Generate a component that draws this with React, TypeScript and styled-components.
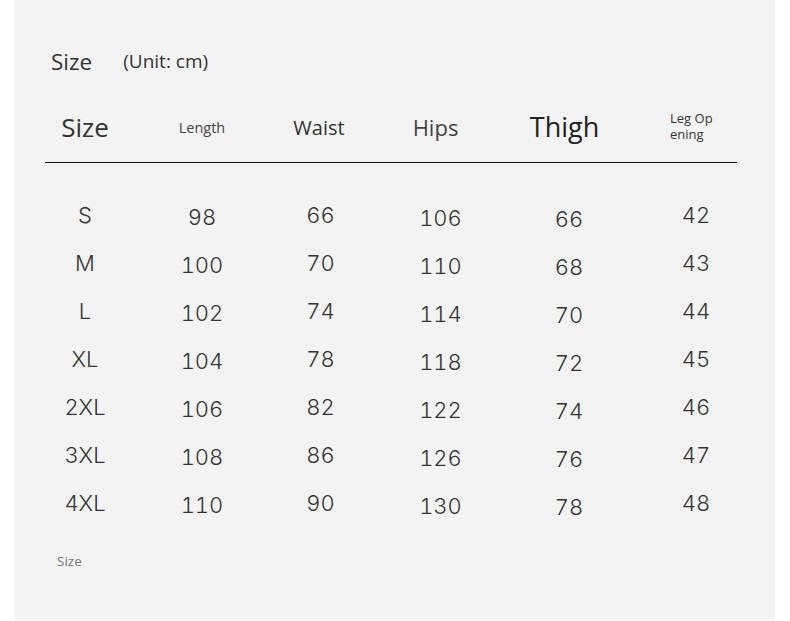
import React from "react";
import styled, { createGlobalStyle } from "styled-components";

const GlobalStyle = createGlobalStyle`
  html, body { margin: 0; padding: 0; background: #ffffff; }
  body { font-family: "Open Sans", "Noto Sans", sans-serif; }
`;

const COLS = "80px 154px 82px 154px 104px 152px";

const Panel = styled.div`
  margin-left: 15px;
  width: 760px;
  height: 620px;
  background: #f3f3f3;
  padding: 41px 0 0 30px;
  box-sizing: border-box;
`;

const TitleRow = styled.div`
  display: flex;
  align-items: center;
  height: 40px;
  padding-left: 6px;
  gap: 31px;
  color: #333;
`;

const Title = styled.span`
  font-size: 22.5px;
`;

const Unit = styled.span`
  font-size: 19px;
`;

const Table = styled.div`
  width: 692px;
  margin-top: 12px;
`;

const HeaderRow = styled.div`
  display: grid;
  grid-template-columns: ${COLS};
  height: 69px;
  align-items: center;
  border-bottom: 1px solid #111;
`;

const HeadCell = styled.div<{ $size: number; $color: string; $dx: number; $dy: number; $narrow?: boolean }>`
  justify-self: center;
  text-align: ${(p) => (p.$narrow ? "left" : "center")};
  font-size: ${(p) => p.$size}px;
  color: ${(p) => p.$color};
  line-height: ${(p) => (p.$narrow ? "16px" : "1.2")};
  width: ${(p) => (p.$narrow ? "48px" : "auto")};
  word-break: ${(p) => (p.$narrow ? "break-all" : "normal")};
  transform: translate(${(p) => p.$dx}px, ${(p) => p.$dy}px);
`;

const Body = styled.div`
  padding-top: 28px;
`;

const Row = styled.div`
  display: grid;
  grid-template-columns: ${COLS};
  height: 48px;
`;

const Cell = styled.div<{ $dx: number; $dy: number }>`
  text-align: center;
  font-family: "Inter", "Liberation Sans", Arial, sans-serif;
  font-weight: 300;
  font-size: 22px;
  font-variant-numeric: tabular-nums;
  line-height: 48px;
  color: #333;
  transform: translate(${(p) => p.$dx}px, ${(p) => p.$dy}px);
`;

const Footnote = styled.div`
  margin-top: 24px;
  padding-left: 12px;
  font-size: 13.5px;
  line-height: 20px;
  color: #777;
`;

const headers = [
  { label: "Size", size: 26, color: "#333", dx: 0, dy: 0 },
  { label: "Length", size: 14.5, color: "#444", dx: 0, dy: 0 },
  { label: "Waist", size: 20, color: "#333", dx: -1, dy: 0 },
  { label: "Hips", size: 22, color: "#444", dx: -2.5, dy: 0 },
  { label: "Thigh", size: 27, color: "#222", dx: -2.5, dy: 0 },
  { label: "Leg Opening", size: 13, color: "#333", dx: -1, dy: -2, narrow: true },
];

const offsets = [
  { dx: 0, dy: -0.5 },
  { dx: 0, dy: 1.5 },
  { dx: 0.5, dy: 0 },
  { dx: 2.5, dy: 3 },
  { dx: 2, dy: 4 },
  { dx: 1, dy: 0 },
];

const rows = [
  ["S", "98", "66", "106", "66", "42"],
  ["M", "100", "70", "110", "68", "43"],
  ["L", "102", "74", "114", "70", "44"],
  ["XL", "104", "78", "118", "72", "45"],
  ["2XL", "106", "82", "122", "74", "46"],
  ["3XL", "108", "86", "126", "76", "47"],
  ["4XL", "110", "90", "130", "78", "48"],
];

export default function App() {
  return (
    <>
      <GlobalStyle />
      <Panel>
        <TitleRow>
          <Title>Size</Title>
          <Unit>(Unit: cm)</Unit>
        </TitleRow>
        <Table>
          <HeaderRow>
            {headers.map((h) => (
              <HeadCell
                key={h.label}
                $size={h.size}
                $color={h.color}
                $dx={h.dx}
                $dy={h.dy}
                $narrow={h.narrow}
              >
                {h.label}
              </HeadCell>
            ))}
          </HeaderRow>
          <Body>
            {rows.map((r) => (
              <Row key={r[0]}>
                {r.map((v, i) => (
                  <Cell key={i} $dx={offsets[i].dx} $dy={offsets[i].dy}>
                    {v}
                  </Cell>
                ))}
              </Row>
            ))}
          </Body>
        </Table>
        <Footnote>Size</Footnote>
      </Panel>
    </>
  );
}
